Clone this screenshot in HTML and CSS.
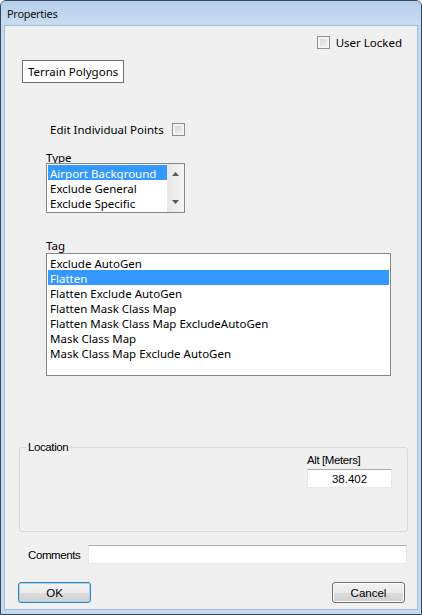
FILE: index.html
```html
<!DOCTYPE html>
<html lang="en">
<head>
  <meta charset="UTF-8" />
  <meta name="viewport" content="width=device-width, initial-scale=1.0" />
  <title>Properties</title>
  <link rel="stylesheet" href="styles.css">
</head>
<body>
  <div class="window">
    <div class="titlebar">Properties</div>

    <div class="client">
      <div class="lock-row">
        <span class="check"></span>
        <span>User Locked</span>
      </div>

      <div class="kind-box">Terrain Polygons</div>

      <div class="points-row">
        <span>Edit Individual Points</span>
        <span class="check"></span>
      </div>

      <div class="field-label type-label">Type</div>
      <div class="listbox type-list">
        <ul class="items">
          <li class="selected">Airport Background</li>
          <li>Exclude General</li>
          <li>Exclude Specific</li>
        </ul>
        <div class="vscroll">
          <svg width="7" height="4" viewBox="0 0 7 4"><polygon points="0,4 3.5,0 7,4" fill="#5a5a5a"/></svg>
          <svg width="7" height="4" viewBox="0 0 7 4"><polygon points="0,0 7,0 3.5,4" fill="#5a5a5a"/></svg>
        </div>
      </div>

      <div class="field-label tag-label">Tag</div>
      <div class="listbox tag-list">
        <ul class="items">
          <li>Exclude AutoGen</li>
          <li class="selected">Flatten</li>
          <li>Flatten Exclude AutoGen</li>
          <li>Flatten Mask Class Map</li>
          <li>Flatten Mask Class Map ExcludeAutoGen</li>
          <li>Mask Class Map</li>
          <li>Mask Class Map Exclude AutoGen</li>
        </ul>
      </div>

      <fieldset class="group">
        <legend>Location</legend>
        <div class="alt-field">
          <label for="alt">Alt [Meters]</label>
          <input type="text" id="alt" value="38.402" />
        </div>
      </fieldset>

      <div class="comments-row">
        <label for="comments">Comments</label>
        <input type="text" id="comments" />
      </div>

      <div class="button-row">
        <button class="btn default">OK</button>
        <button class="btn">Cancel</button>
      </div>
    </div>
  </div>
</body>
</html>
```

FILE: styles.css
```css
* {
  margin: 0;
  padding: 0;
  box-sizing: border-box;
}

body {
  background: #ffffff;
  font-family: 'Noto Sans', sans-serif;
  font-size: 11.5px;
  color: #000;
}

.window {
  width: 422px;
  height: 615px;
  border: 1px solid #34485e;
  border-radius: 6px 6px 0 0;
  background: #c4d9f1;
  padding: 0 3px 4px 3px;
  display: flex;
  flex-direction: column;
  overflow: hidden;
}

.titlebar {
  height: 24px;
  margin: 0 -3px;
  padding-left: 6px;
  display: flex;
  align-items: center;
  background: linear-gradient(#b7cfea, #c2d7ef 60%, #c9ddf2);
  color: #111;
  font-size: 11px;
  letter-spacing: -0.3px;
}

.client {
  flex: 1;
  background: #f0f0f0;
  border: 1px solid #a9bed6;
  display: flex;
  flex-direction: column;
  align-items: flex-start;
}

/* checkbox, vista style */
.check {
  display: inline-block;
  width: 13px;
  height: 13px;
  border: 1px solid #8e8f8f;
  background: linear-gradient(135deg, #cbcfd5, #f7f7f7);
  box-shadow: inset 0 0 0 2px #f4f4f4;
}

.lock-row {
  align-self: stretch;
  margin-top: 10px;
  padding-right: 15px;
  height: 13px;
  display: flex;
  justify-content: flex-end;
  align-items: center;
  gap: 6px;
}

.kind-box {
  margin: 11px 0 0 17px;
  width: 102px;
  height: 23px;
  border: 1px solid #707070;
  background: #fff;
  padding-left: 5px;
  line-height: 21px;
}

.points-row {
  margin: 40px 0 0 45px;
  height: 13px;
  display: flex;
  align-items: center;
  gap: 8px;
}

.field-label {
  margin: 14px 0 0 41px;
  height: 14px;
  line-height: 14px;
}

.type-label {
  margin-top: 13px;
  line-height: 18px;
}

.tag-label {
  margin-top: 26px;
}

.listbox {
  margin-left: 41px;
  background: #fff;
  border: 1px solid #828790;
  padding: 1px;
}

.items {
  list-style: none;
}

.items li {
  height: 15px;
  line-height: 17px;
  padding-left: 2px;
  white-space: nowrap;
}

.items li.selected {
  background: #3399ff;
  color: #fff;
}

.type-list {
  width: 139px;
  height: 50px;
  display: flex;
  padding-right: 0;
}

.type-list .items {
  flex: 1;
}

.vscroll {
  width: 17px;
  margin: -1px 0;
  background: linear-gradient(90deg, #e8e8e8, #f4f4f4);
  display: flex;
  flex-direction: column;
  justify-content: space-between;
  align-items: center;
  padding: 8px 0 8px;
}

.tag-list {
  width: 345px;
  height: 123px;
}

/* lower half uses the older dialog font */
.group,
.comments-row,
.button-row {
  font-family: 'Liberation Sans', Arial, sans-serif;
  font-size: 11.5px;
  letter-spacing: -0.4px;
}

.group {
  margin: 65px 0 0 14px;
  width: 389px;
  height: 91px;
  border: 1px solid #d3d9de;
  border-radius: 3px;
  padding: 0;
}

.group legend {
  margin-left: 6px;
  padding: 0 2px;
  line-height: 13px;
}

.alt-field {
  width: 85px;
  margin: 0 15px 0 auto;
  display: flex;
  flex-direction: column;
  gap: 2px;
}

.alt-field label {
  line-height: 13px;
}

input {
  height: 19px;
  border: 1px solid #e3e9ef;
  border-top-color: #abadb3;
  background: #fff;
  font: inherit;
  outline: none;
}

.alt-field input {
  width: 85px;
  text-align: center;
}

.comments-row {
  margin: 13px 0 0 23px;
  display: flex;
  align-items: center;
}

.comments-row label {
  width: 60px;
}

.comments-row input {
  width: 319px;
}

.button-row {
  align-self: stretch;
  margin: 18px 12px 0 13px;
  display: flex;
  justify-content: space-between;
}

.btn {
  width: 73px;
  height: 21px;
  border: 1px solid #707070;
  border-radius: 3px;
  background: linear-gradient(#f2f2f2 0%, #ebebeb 50%, #dddddd 51%, #cfcfcf 100%);
  box-shadow: inset 0 0 0 1px #fbfbfb;
  font: inherit;
  color: #000;
}

.btn.default {
  border-color: #3c7fb1;
  box-shadow: inset 0 0 0 1px #9fd8f8;
}
```
